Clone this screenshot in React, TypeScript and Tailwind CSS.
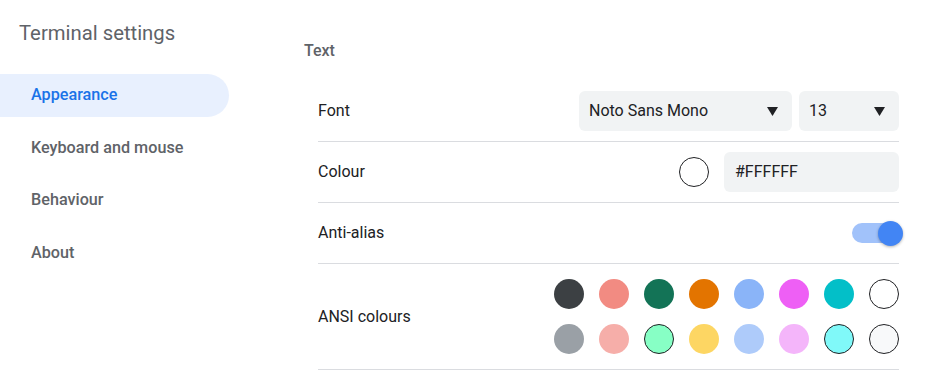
const ansi = [
  { c: "#3c4043" },
  { c: "#f28b82" },
  { c: "#137356" },
  { c: "#e37400" },
  { c: "#8ab4f8" },
  { c: "#ee5ff5" },
  { c: "#03bfc8" },
  { c: "#ffffff", ring: true },
  { c: "#9aa0a6" },
  { c: "#f6aea9" },
  { c: "#87ffc5", ring: true },
  { c: "#fdd663" },
  { c: "#aecbfa" },
  { c: "#f4b5fa" },
  { c: "#80f9f9", ring: true },
  { c: "#f8f9fa", ring: true },
];

function Caret() {
  return (
    <svg width="11" height="9" viewBox="0 0 11 9" aria-hidden="true">
      <polygon points="0,0 11,0 5.5,9" fill="#202124" />
    </svg>
  );
}

function Select({ value, width }: { value: string; width: string }) {
  return (
    <div
      className={`flex h-10 items-center justify-between rounded-md bg-[#f1f3f4] pl-[10px] pr-[14px] text-[16px] text-[#202124] ${width}`}
    >
      <span>{value}</span>
      <Caret />
    </div>
  );
}

export default function App() {
  const nav = ["Appearance", "Keyboard and mouse", "Behaviour", "About"];

  return (
    <div className="flex h-[372px] w-[926px] overflow-hidden bg-white font-['Roboto',sans-serif]">
      <aside className="w-[229px] shrink-0">
        <h1 className="pl-[19px] pt-[19px] text-[20.3px] leading-[28px] text-[#5f6368]">
          Terminal settings
        </h1>
        <nav className="mt-[27px] flex flex-col gap-[9.5px]">
          {nav.map((item, i) => (
            <div
              key={item}
              className={`flex h-[43px] items-center rounded-r-full pl-[31px] text-[16.2px] font-medium ${
                i === 0 ? "bg-[#e8f0fe] text-[#1a73e8]" : "text-[#5f6368]"
              }`}
            >
              {item}
            </div>
          ))}
        </nav>
      </aside>

      <main className="flex-1 pl-[75px] pr-[27px]">
        <h2 className="pt-[41px] text-[16px] font-medium leading-[20px] text-[#5f6368]">
          Text
        </h2>
        <div className="ml-[14px] mt-[20px] text-[16px] text-[#202124]">
          <div className="flex h-[61px] items-center justify-between border-b border-[#dadce0]">
            <span>Font</span>
            <div className="flex gap-[7px]">
              <Select value="Noto Sans Mono" width="w-[213px]" />
              <Select value="13" width="w-[100px]" />
            </div>
          </div>

          <div className="flex h-[61px] items-center justify-between border-b border-[#dadce0]">
            <span>Colour</span>
            <div className="flex items-center gap-[15px]">
              <div className="h-[30px] w-[30px] rounded-full border border-[#202124] bg-white" />
              <div className="flex h-10 w-[175px] items-center rounded-md bg-[#f1f3f4] pl-[11px]">
                #FFFFFF
              </div>
            </div>
          </div>

          <div className="flex h-[61px] items-center justify-between border-b border-[#dadce0]">
            <span>Anti-alias</span>
            <div className="relative mr-[-4px] h-[25px] w-[51px]">
              <div className="absolute left-0 top-[2.5px] h-[20px] w-[44px] rounded-full bg-[#a1c2fa]" />
              <div className="absolute right-0 top-0 h-[25px] w-[25px] rounded-full bg-[#4285f4] shadow-[0_1px_3px_rgba(0,0,0,0.3)]" />
            </div>
          </div>

          <div className="flex h-[106px] items-center justify-between border-b border-[#dadce0]">
            <span>ANSI colours</span>
            <div className="grid grid-cols-8 gap-[15px]">
              {ansi.map((a, i) => (
                <div
                  key={i}
                  className={`h-[30px] w-[30px] rounded-full ${a.ring ? "border border-[#202124]" : ""}`}
                  style={{ backgroundColor: a.c }}
                />
              ))}
            </div>
          </div>
        </div>
      </main>
    </div>
  );
}
